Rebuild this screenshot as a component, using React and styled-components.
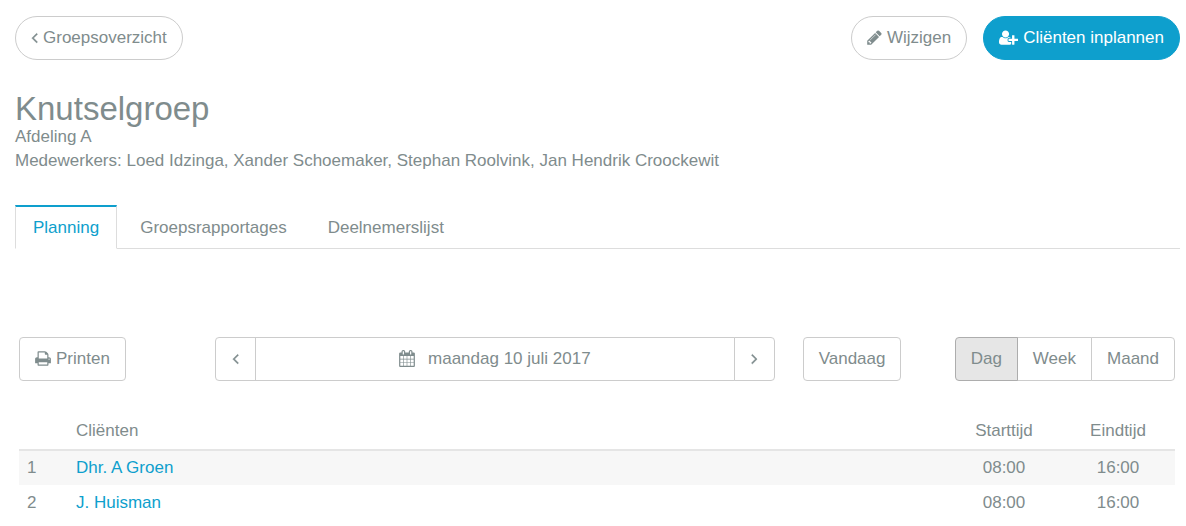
import React, { useState } from 'react';
import styled, { createGlobalStyle, css } from 'styled-components';

const ICONS = {
  angleLeft: {
    box: '525 0 742 1792',
    width: 7,
    stroke: 50,
    path: 'M1203 544q0 13-10 23l-393 393 393 393q10 10 10 23t-10 23l-50 50q-10 10-23 10t-23-10l-466-466q-10-10-10-23t10-23l466-466q10-10 23-10t23 10l50 50q10 10 10 23z',
  },
  angleRight: {
    box: '525 0 742 1792',
    width: 7,
    stroke: 50,
    path: 'M1171 960q0 13-10 23l-466 466q-10 10-23 10t-23-10l-50-50q-10-10-10-23t10-23l393-393-393-393q-10-10-10-23t10-23l50-50q10-10 23-10t23 10l466 466q10 10 10 23z',
  },
  pencil: {
    box: '128 0 1536 1792',
    width: 15,
    path: 'M491 1536l91-91-235-235-91 91v107h128v128h107zm523-928q0-22-22-22-10 0-17 7l-542 542q-7 7-7 17 0 22 22 22 10 0 17-7l542-542q7-7 7-17zm-54-192l416 416-832 832h-416v-416zm683 96q0 53-37 90l-166 166-416-416 166-165q36-38 90-38 53 0 91 38l235 234q37 39 37 91z',
  },
  userPlus: {
    box: '0 0 2048 1792',
    width: 19,
    path: 'M704 896q-159 0-271.5-112.5t-112.5-271.5 112.5-271.5 271.5-112.5 271.5 112.5 112.5 271.5-112.5 271.5-271.5 112.5zm960 128h352q13 0 22.5 9.5t9.5 22.5v192q0 13-9.5 22.5t-22.5 9.5h-352v352q0 13-9.5 22.5t-22.5 9.5h-192q-13 0-22.5-9.5t-9.5-22.5v-352h-352q-13 0-22.5-9.5t-9.5-22.5v-192q0-13 9.5-22.5t22.5-9.5h352v-352q0-13 9.5-22.5t22.5-9.5h192q13 0 22.5 9.5t9.5 22.5v352zm-736 224q0 52 38 90t90 38h256v238q-68 50-171 50h-874q-121 0-194-69t-73-190q0-53 3.5-103.5t14-109 26.5-108.5 43-97.5 62-81 85.5-53.5 111.5-20q19 0 39 17 79 61 154.5 91.5t164.5 30.5 164.5-30.5 154.5-91.5q20-17 39-17 132 0 217 96h-223q-52 0-90 38t-38 90v192z',
  },
  print: {
    box: '64 0 1664 1792',
    width: 16,
    path: 'M448 1536h896v-256h-896v256zm0-640h896v-384h-160q-40 0-68-28t-28-68v-160h-640v640zm1152 64q0-26-19-45t-45-19-45 19-19 45 19 45 45 19 45-19 19-45zm128 0v416q0 13-9.5 22.5t-22.5 9.5h-224v160q0 40-28 68t-68 28h-960q-40 0-68-28t-28-68v-160h-224q-13 0-22.5-9.5t-9.5-22.5v-416q0-79 56.5-135.5t135.5-56.5h64v-544q0-40 28-68t68-28h672q40 0 88 20t76 48l152 152q28 28 48 76t20 88v256h64q79 0 135.5 56.5t56.5 135.5z',
  },
  calendar: {
    box: '64 0 1664 1792',
    width: 16,
    path: 'M192 1664h288v-288h-288v288zm352 0h320v-288h-320v288zm-352-352h288v-320h-288v320zm352 0h320v-320h-320v320zm-352-384h288v-288h-288v288zm736 736h320v-288h-320v288zm-384-736h320v-288h-320v288zm768 736h288v-288h-288v288zm-384-352h320v-320h-320v320zm-352-864v-288q0-13-9.5-22.5t-22.5-9.5h-64q-13 0-22.5 9.5t-9.5 22.5v288q0 13 9.5 22.5t22.5 9.5h64q13 0 22.5-9.5t9.5-22.5zm736 864h288v-320h-288v320zm-384-384h320v-288h-320v288zm384 0h288v-288h-288v288zm32-480v-288q0-13-9.5-22.5t-22.5-9.5h-64q-13 0-22.5 9.5t-9.5 22.5v288q0 13 9.5 22.5t22.5 9.5h64q13 0 22.5-9.5t9.5-22.5zm384-64v1280q0 52-38 90t-90 38h-1408q-52 0-90-38t-38-90v-1280q0-52 38-90t90-38h128v-96q0-66 47-113t113-47h64q66 0 113 47t47 113v96h384v-96q0-66 47-113t113-47h64q66 0 113 47t47 113v96h128q52 0 90 38t38 90z',
  },
};

const TABS = ['Planning', 'Groepsrapportages', 'Deelnemerslijst'];
const VIEWS = ['Dag', 'Week', 'Maand'];
const CLIENTS = [
  { name: 'Dhr. A Groen', start: '08:00', end: '16:00' },
  { name: 'J. Huisman', start: '08:00', end: '16:00' },
];

function Icon({ name }) {
  const { box, width, stroke = 0, path } = ICONS[name];
  return (
    <Glyph viewBox={box} width={width} height="17" aria-hidden="true">
      <path d={path} strokeWidth={stroke} />
    </Glyph>
  );
}

export default function App() {
  const [tab, setTab] = useState('Planning');
  const [view, setView] = useState('Dag');

  return (
    <Page>
      <GlobalStyle />
      <TopBar>
        <PillLink href="#groepen">
          <Icon name="angleLeft" />
          Groepsoverzicht
        </PillLink>
        <Actions>
          <PillButton type="button">
            <Icon name="pencil" />
            Wijzigen
          </PillButton>
          <PillButton type="button" $primary>
            <Icon name="userPlus" />
            Cliënten inplannen
          </PillButton>
        </Actions>
      </TopBar>

      <header>
        <Title>Knutselgroep</Title>
        <Info>Afdeling A</Info>
        <Info>Medewerkers: Loed Idzinga, Xander Schoemaker, Stephan Roolvink, Jan Hendrik Croockewit</Info>
      </header>

      <Tabs role="tablist">
        {TABS.map((label) => (
          <Tab
            key={label}
            type="button"
            role="tab"
            aria-selected={tab === label}
            $active={tab === label}
            onClick={() => setTab(label)}
          >
            {label}
          </Tab>
        ))}
      </Tabs>

      <Panel>
        <Toolbar>
          <Button type="button">
            <Icon name="print" />
            Printen
          </Button>
          <DateGroup>
            <StepButton type="button" aria-label="Vorige dag">
              <Icon name="angleLeft" />
            </StepButton>
            <DateButton type="button">
              <Icon name="calendar" />
              maandag 10 juli 2017
            </DateButton>
            <StepButton type="button" aria-label="Volgende dag">
              <Icon name="angleRight" />
            </StepButton>
          </DateGroup>
          <Button type="button">Vandaag</Button>
          <Group>
            {VIEWS.map((label) => (
              <Button
                key={label}
                type="button"
                aria-pressed={view === label}
                $active={view === label}
                onClick={() => setView(label)}
              >
                {label}
              </Button>
            ))}
          </Group>
        </Toolbar>

        <Table>
          <thead>
            <tr>
              <NumberHead aria-label="Nummer" />
              <Head>Cliënten</Head>
              <TimeHead>Starttijd</TimeHead>
              <TimeHead>Eindtijd</TimeHead>
            </tr>
          </thead>
          <tbody>
            {CLIENTS.map((client, index) => (
              <Row key={client.name}>
                <Cell>{index + 1}</Cell>
                <Cell><ClientLink href="#client">{client.name}</ClientLink></Cell>
                <TimeCell>{client.start}</TimeCell>
                <TimeCell>{client.end}</TimeCell>
              </Row>
            ))}
          </tbody>
        </Table>
      </Panel>
    </Page>
  );
}

const GlobalStyle = createGlobalStyle`
  * {
    box-sizing: border-box;
  }

  body {
    margin: 0;
    background: #fff;
    color: #7f8c8d;
    font-family: "Liberation Sans", Arial, sans-serif;
    font-size: 17px;
    line-height: 24px;
  }
`;

const Page = styled.main`
  padding: 16px 6px 0 15px;
`;

const Glyph = styled.svg`
  flex: none;
  margin-bottom: 2px;
  fill: currentColor;
  stroke: currentColor;
`;

const TopBar = styled.div`
  display: flex;
  justify-content: space-between;
`;

const Actions = styled.div`
  display: flex;
  gap: 16px;
`;

const control = css`
  display: inline-flex;
  align-items: center;
  justify-content: center;
  gap: 5px;
  height: 44px;
  padding: 0 15px;
  border: 1px solid #ccc;
  background: #fff;
  color: inherit;
  font: inherit;
  white-space: nowrap;
  cursor: pointer;
`;

const PillLink = styled.a`
  ${control}
  border-radius: 22px;
  text-decoration: none;
`;

const PillButton = styled.button`
  ${control}
  border-radius: 22px;
  ${({ $primary }) => $primary && css`
    border-color: #0e9fcd;
    background: #0e9fcd;
    color: #fff;
  `}
`;

const Title = styled.h1`
  margin: 32px 0 0;
  font-size: 33px;
  font-weight: normal;
  line-height: 33px;
`;

const Info = styled.p`
  margin: 0;
`;

const Tabs = styled.div`
  display: flex;
  gap: 5px;
  margin-top: 32px;
  border-bottom: 1px solid #ddd;
`;

const Tab = styled.button`
  height: 44px;
  margin-bottom: -1px;
  padding: 0 17px;
  border: 1px solid transparent;
  border-top-width: 2px;
  background: transparent;
  color: inherit;
  font: inherit;
  cursor: pointer;
  ${({ $active }) => $active && css`
    border-color: #0e9fcd #ddd #fff;
    background: #fff;
    color: #0e9fcd;
  `}
`;

const Panel = styled.section`
  padding: 88px 5px 0 4px;
`;

const Toolbar = styled.div`
  display: grid;
  grid-template-columns: 168px 1fr 124px auto;
  column-gap: 28px;
  justify-items: start;
`;

const Button = styled.button`
  ${control}
  border-radius: 4px;
  ${({ $active }) => $active && css`
    border-color: #adadad;
    background: #e6e6e6;
  `}
`;

const StepButton = styled(Button)`
  padding: 0 16px;
`;

const DateButton = styled(Button)`
  flex: 1;
  gap: 13px;
`;

const Group = styled.div`
  display: flex;

  > * + * {
    margin-left: -1px;
  }

  > :not(:first-child) {
    border-top-left-radius: 0;
    border-bottom-left-radius: 0;
  }

  > :not(:last-child) {
    border-top-right-radius: 0;
    border-bottom-right-radius: 0;
  }

  > [aria-pressed="true"] {
    z-index: 1;
  }
`;

const DateGroup = styled(Group)`
  justify-self: stretch;
`;

const Table = styled.table`
  width: 100%;
  margin-top: 32px;
  border-collapse: collapse;
  table-layout: fixed;
`;

const Head = styled.th`
  height: 37px;
  padding: 0 8px;
  border-bottom: 2px solid #e5e5e5;
  font-weight: normal;
  text-align: left;
`;

const NumberHead = styled(Head)`
  width: 49px;
`;

const TimeHead = styled(Head)`
  width: 114px;
  text-align: center;
`;

const Row = styled.tr`
  &:nth-child(odd) {
    background: #f7f7f7;
  }
`;

const Cell = styled.td`
  height: 35px;
  padding: 0 8px;
`;

const TimeCell = styled(Cell)`
  text-align: center;
`;

const ClientLink = styled.a`
  color: #0e9fcd;
  text-decoration: none;
`;
